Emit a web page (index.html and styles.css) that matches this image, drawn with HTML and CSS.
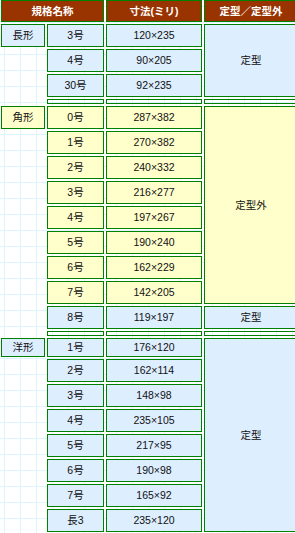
FILE: index.html
```html
<!DOCTYPE html>
<html lang="ja">
<head>
<meta charset="utf-8">
<title>封筒の規格</title>
<link rel="stylesheet" href="styles.css">
</head>
<body>
<table class="sizes">
  <colgroup>
    <col class="w-kind">
    <col class="w-no">
    <col class="w-mm">
    <col class="w-std">
  </colgroup>
  <thead>
    <tr class="r-head">
      <th colspan="2">規格名称</th>
      <th>寸法(ミリ)</th>
      <th>定型／定型外</th>
    </tr>
  </thead>
  <tbody>
    <tr class="r">
      <td class="cell blue">長形</td>
      <td class="cell blue">3号</td>
      <td class="cell blue">120×235</td>
      <td class="cell blue" rowspan="3">定型</td>
    </tr>
    <tr class="r">
      <td class="none"></td>
      <td class="cell blue">4号</td>
      <td class="cell blue">90×205</td>
    </tr>
    <tr class="r">
      <td class="none"></td>
      <td class="cell blue">30号</td>
      <td class="cell blue">92×235</td>
    </tr>
    <tr class="r-sp">
      <td class="none"></td>
      <td class="cell"></td>
      <td class="cell"></td>
      <td class="cell"></td>
    </tr>

    <tr class="r">
      <td class="cell yellow">角形</td>
      <td class="cell yellow">0号</td>
      <td class="cell yellow">287×382</td>
      <td class="cell yellow" rowspan="8">定型外</td>
    </tr>
    <tr class="r"><td class="none"></td><td class="cell yellow">1号</td><td class="cell yellow">270×382</td></tr>
    <tr class="r"><td class="none"></td><td class="cell yellow">2号</td><td class="cell yellow">240×332</td></tr>
    <tr class="r"><td class="none"></td><td class="cell yellow">3号</td><td class="cell yellow">216×277</td></tr>
    <tr class="r"><td class="none"></td><td class="cell yellow">4号</td><td class="cell yellow">197×267</td></tr>
    <tr class="r"><td class="none"></td><td class="cell yellow">5号</td><td class="cell yellow">190×240</td></tr>
    <tr class="r"><td class="none"></td><td class="cell yellow">6号</td><td class="cell yellow">162×229</td></tr>
    <tr class="r"><td class="none"></td><td class="cell yellow">7号</td><td class="cell yellow">142×205</td></tr>
    <tr class="r">
      <td class="none"></td>
      <td class="cell blue">8号</td>
      <td class="cell blue">119×197</td>
      <td class="cell blue">定型</td>
    </tr>
    <tr class="r-sp">
      <td class="none"></td>
      <td class="cell"></td>
      <td class="cell"></td>
      <td class="cell"></td>
    </tr>

    <tr class="r-short">
      <td class="cell blue">洋形</td>
      <td class="cell blue">1号</td>
      <td class="cell blue">176×120</td>
      <td class="cell blue" rowspan="8">定型</td>
    </tr>
    <tr class="r"><td class="none"></td><td class="cell blue">2号</td><td class="cell blue">162×114</td></tr>
    <tr class="r"><td class="none"></td><td class="cell blue">3号</td><td class="cell blue">148×98</td></tr>
    <tr class="r"><td class="none"></td><td class="cell blue">4号</td><td class="cell blue">235×105</td></tr>
    <tr class="r"><td class="none"></td><td class="cell blue">5号</td><td class="cell blue">217×95</td></tr>
    <tr class="r"><td class="none"></td><td class="cell blue">6号</td><td class="cell blue">190×98</td></tr>
    <tr class="r"><td class="none"></td><td class="cell blue">7号</td><td class="cell blue">165×92</td></tr>
    <tr class="r"><td class="none"></td><td class="cell blue">長3</td><td class="cell blue">235×120</td></tr>
  </tbody>
</table>
</body>
</html>
```

FILE: styles.css
```css
html {
  overflow: hidden;
  background-color: #ffffff;
  background-image:
    linear-gradient(to right, #ddf3fd 1px, transparent 1px),
    linear-gradient(to bottom, #ddf3fd 1px, transparent 1px);
  background-size: 16px 16px;
  background-position: 4px 6px;
}

body {
  margin: 0;
  font-family: "Liberation Sans", "Noto Sans CJK JP", sans-serif;
  font-size: 10.5px;
  color: #111;
}

.sizes {
  margin: -2px 0 0 -1px;
  border-collapse: separate;
  border-spacing: 2px;
  table-layout: fixed;
  width: 301px;
}

.w-kind { width: 44px; }
.w-no { width: 57px; }
.w-mm { width: 96px; }
.w-std { width: 94px; }

.sizes th,
.sizes td {
  padding: 0;
  text-align: center;
  vertical-align: middle;
  line-height: 13px;
  white-space: nowrap;
}

.sizes th {
  background: #993300;
  color: #fff;
  font-weight: bold;
  font-size: 10.5px;
  border: 1px solid #008000;
}

.r-head { height: 22px; }
.r { height: 23px; }
.r-short { height: 19px; }
.r-sp { height: 5px; }

.cell {
  border: 1px solid #008000;
}

.none {
  border: 0;
}

.blue { background: #ddeeff; }
.yellow { background: #ffffcc; }
```
